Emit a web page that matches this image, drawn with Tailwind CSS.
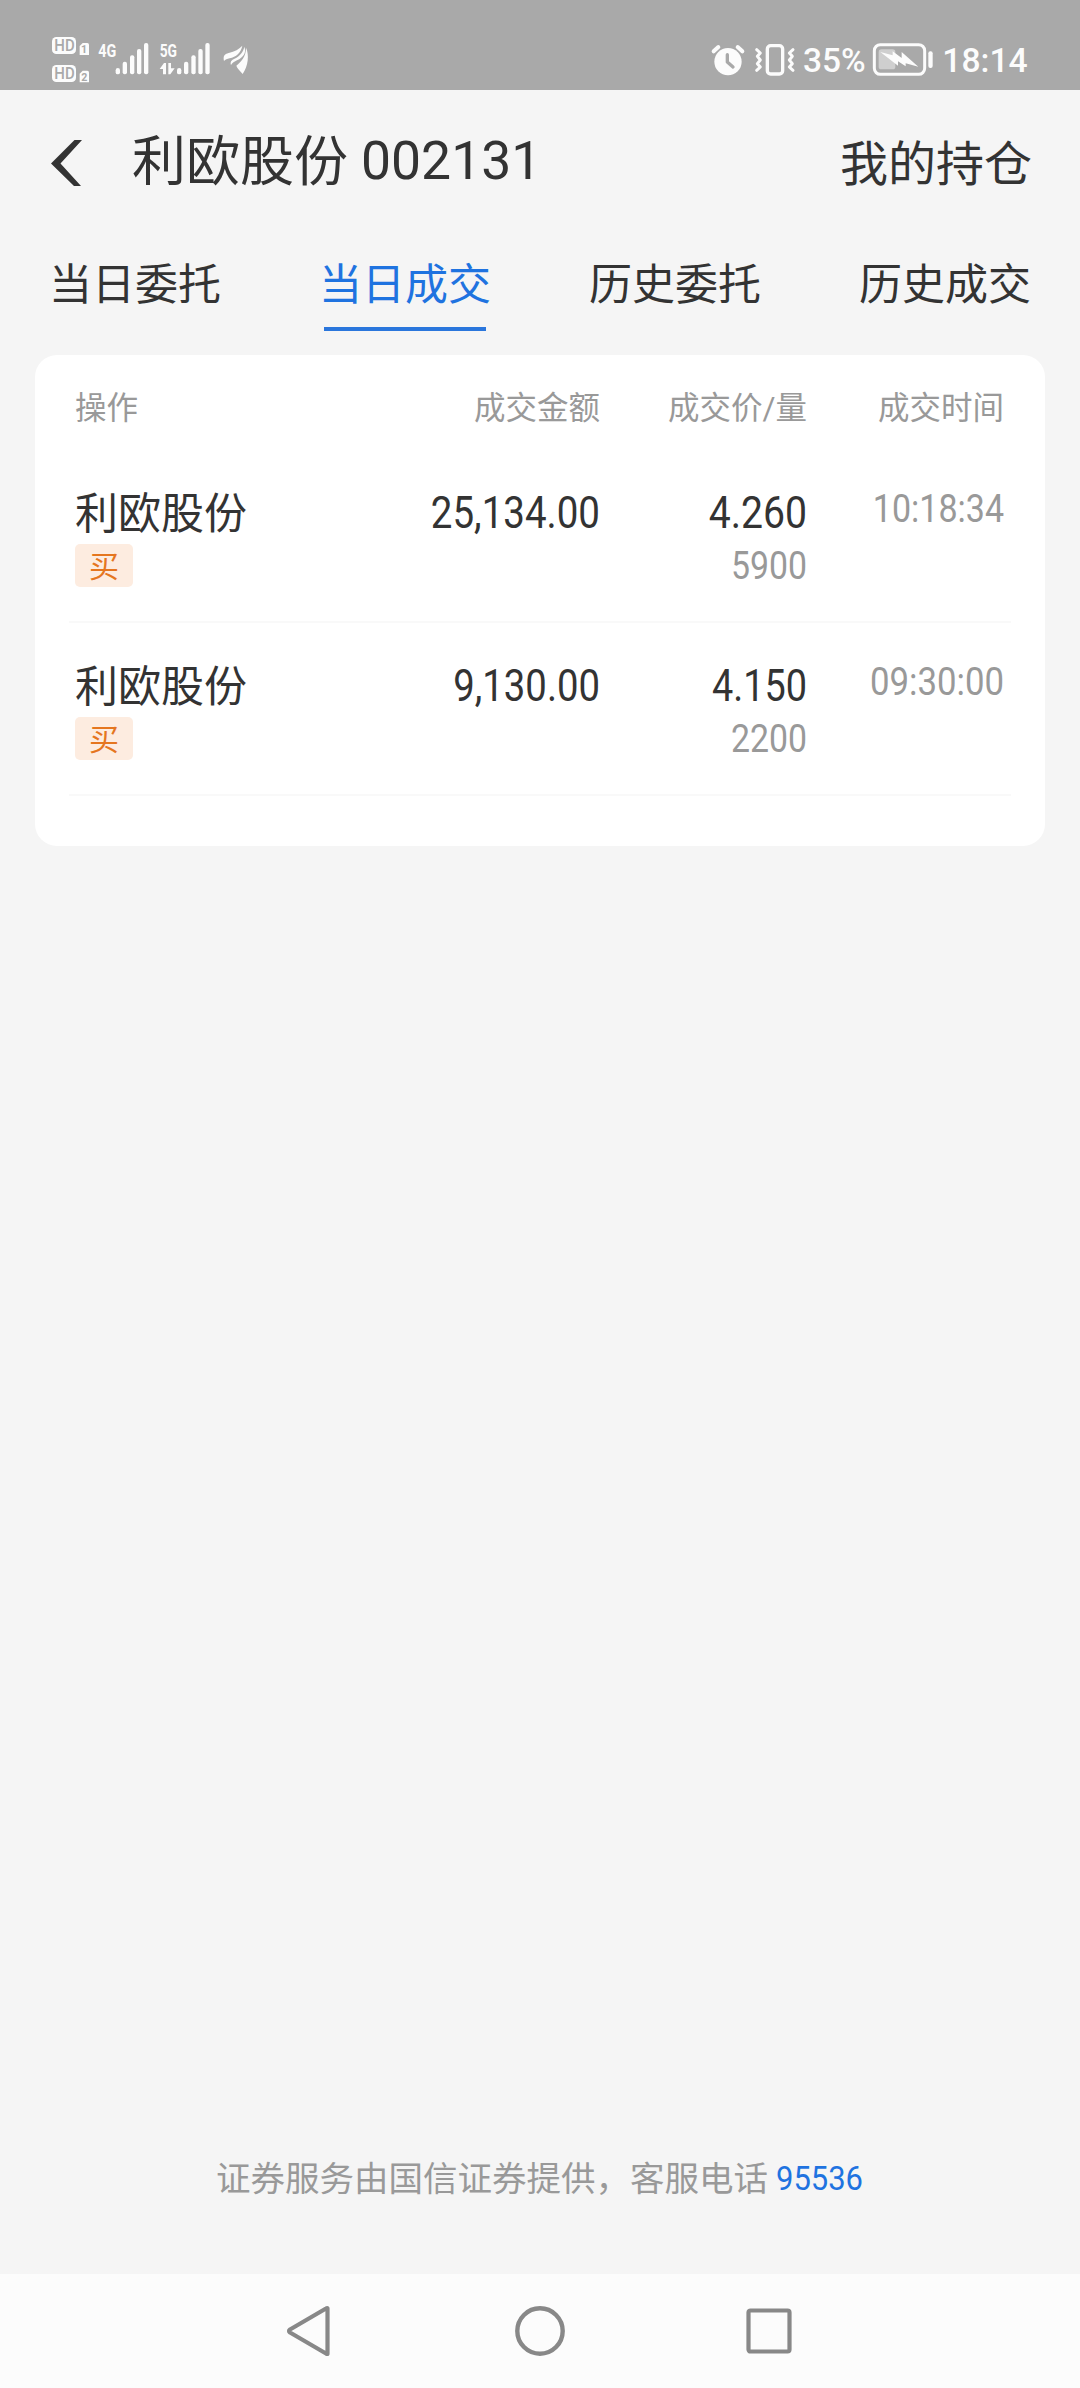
<!DOCTYPE html>
<html lang="zh-CN">
<head>
<meta charset="utf-8">
<title>当日成交</title>
<script src="https://cdn.jsdelivr.net/npm/@tailwindcss/browser@4"></script>
</head>
<body class="bg-[#f5f5f5]">
<div class="flex h-[2388px] w-[1080px] flex-col overflow-hidden bg-[#f5f5f5] font-['Roboto','Noto_Sans_CJK_SC',sans-serif] text-[#333]">

  <!-- status bar -->
  <header class="flex h-[90px] shrink-0 items-end justify-between bg-[#a9a9a9] px-[30px]">
    <svg class="h-[70px] w-[240px]" viewBox="0 0 720 210" fill="#fcfcfc">
      <rect x="66" y="51" width="72" height="51" rx="13"/>
      <rect x="66" y="135" width="72" height="51" rx="13"/>
      <g fill="#a9a9a9" font-family="Roboto" font-weight="500" font-size="48">
        <text x="73" y="94" textLength="61" lengthAdjust="spacingAndGlyphs">HD</text>
        <text x="73" y="178" textLength="61" lengthAdjust="spacingAndGlyphs">HD</text>
      </g>
      <path d="M158 69H172Q177 69 177 74V105H149V78Z"/>
      <path d="M158 152H172Q177 152 177 157V187H149V161Z"/>
      <g fill="#a9a9a9" font-family="Roboto" font-weight="700" font-size="32">
        <text x="153" y="99">1</text>
        <text x="154" y="183">2</text>
      </g>
      <g font-family="Roboto" font-weight="700" font-size="57">
        <text x="205" y="111" textLength="54" lengthAdjust="spacingAndGlyphs">4G</text>
        <text x="389" y="111" textLength="52" lengthAdjust="spacingAndGlyphs">5G</text>
      </g>
      <g id="bars">
        <rect x="257" y="144" width="13" height="19" rx="6.5"/>
        <rect x="278" y="125" width="13" height="38" rx="6"/>
        <rect x="300" y="106" width="13" height="57" rx="6"/>
        <rect x="321" y="87" width="13" height="76" rx="6"/>
        <rect x="342" y="69" width="13" height="94" rx="6"/>
      </g>
      <use href="#bars" x="184"/>
      <path d="M389 147L402 129H408V163H399V147Z"/>
      <path d="M415 129H423V145H434L421 163H415Z"/>
      <path d="M582 123C579 108 583 103 596 99C614 95 628 87 637 77C633 98 618 111 599 115C591 117 586 119 582 123Z"/>
      <path d="M603 135C600 126 604 121 612 117C630 108 640 96 643 80C650 98 640 112 621 121C611 126 606 130 603 135Z"/>
      <path d="M638 162C628 151 622 145 619 137C633 125 648 111 648 83C658 104 655 137 638 162Z"/>
    </svg>
    <svg class="h-[70px] w-[360px]" viewBox="0 0 1080 210" fill="#fcfcfc">
      <circle cx="114" cy="125" r="41"/>
      <path d="M71 94L85 81M157 94L143 81" stroke="#fcfcfc" stroke-width="12" stroke-linecap="round"/>
      <path d="M112 104V126L129 141" fill="none" stroke="#a9a9a9" stroke-width="10" stroke-linecap="round" stroke-linejoin="round"/>
      <rect x="232" y="77" width="46" height="85" rx="10" fill="none" stroke="#fcfcfc" stroke-width="10"/>
      <path d="M200 89L211 99L202 109L211 120L202 131L211 141L200 151" fill="none" stroke="#fcfcfc" stroke-width="9" stroke-linecap="round" stroke-linejoin="round"/>
      <path d="M309 89L298 99L307 109L298 120L307 131L298 141L309 151" fill="none" stroke="#fcfcfc" stroke-width="9" stroke-linecap="round" stroke-linejoin="round"/>
      <text x="339" y="156" font-family="Roboto" font-weight="500" font-size="102" textLength="188" lengthAdjust="spacingAndGlyphs">35%</text>
      <rect x="553" y="74" width="151" height="89" rx="18" fill="none" stroke="#fcfcfc" stroke-width="9"/>
      <rect x="566" y="88" width="50" height="60" rx="8" fill="#cfcfcf"/>
      <path d="M571 96L608 106V94L635 114V96L685 140L647 130V139L624 124V137Z"/>
      <rect x="715" y="94" width="13" height="50" rx="6"/>
      <text x="757" y="156" font-family="Roboto" font-weight="500" font-size="102" textLength="256" lengthAdjust="spacingAndGlyphs">18:14</text>
    </svg>
  </header>

  <!-- title bar -->
  <div class="flex h-[145px] shrink-0 items-center pr-[48px] pl-[50px]">
    <svg class="h-[46px] w-8" viewBox="0 0 32 46" fill="#333"><path d="M24.500 0H32L10.500 23.500L31 46H24L1 23.500Z"/></svg>
    <h1 class="mt-px ml-[50px] flex gap-[13px] text-[54px] leading-[80px] font-normal"><span>利欧股份</span><span class="-mt-0.5 origin-left scale-x-[0.99]">002131</span></h1>
    <a class="mt-1 ml-auto text-[48px] leading-[70px]">我的持仓</a>
  </div>

  <!-- tabs -->
  <nav class="grid h-[96px] shrink-0 grid-cols-4 text-[43px] leading-[64px]">
    <a class="flex flex-col items-center pt-[18px]">当日委托</a>
    <a class="flex flex-col items-center gap-2.5 pt-[18px] text-[#1f73e0]">当日成交<span class="h-1 w-[162px] bg-[#2a76dc]"></span></a>
    <a class="flex flex-col items-center pt-[18px]">历史委托</a>
    <a class="flex flex-col items-center pt-[18px]">历史成交</a>
  </nav>

  <!-- trades -->
  <main class="mx-[35px] mt-6 h-[491px] shrink-0 rounded-[22px] bg-white px-[34px]">
    <div class="grid h-[94px] grid-cols-[294px_231px_207px_197px] pt-[30px] pl-1.5 text-[31.500px] leading-[48px] text-[#999]">
      <span>操作</span><span class="text-right">成交金额</span><span class="text-right">成交价/量</span><span class="text-right">成交时间</span>
    </div>
    <div class="grid h-[174px] grid-cols-[294px_231px_207px_197px] border-b-2 border-[#f9f9f9] pt-[31px] pl-1.5">
      <div>
        <div class="text-[43px] leading-[68px]">利欧股份</div>
        <div class="-mt-1 flex h-[43px] w-[58px] items-center justify-center rounded-[5px] bg-[#fdece0] pt-0.5 text-[30px] leading-none text-[#e5761f]">买</div>
      </div>
      <div class="origin-right scale-x-[0.885] text-right text-[43.500px] leading-[68px]">25,134.00</div>
      <div class="text-right">
        <div class="origin-right scale-x-[0.9] text-[43.500px] leading-[68px]">4.260</div>
        <div class="-mt-[3px] origin-right scale-x-[0.89] text-[38px] leading-[42px] text-[#999]">5900</div>
      </div>
      <div class="origin-right scale-x-[0.895] text-right text-[38px] leading-[58px] text-[#999]">10:18:34</div>
    </div>
    <div class="grid h-[173px] grid-cols-[294px_231px_207px_197px] border-b-2 border-[#f9f9f9] pt-[30px] pl-1.5">
      <div>
        <div class="text-[43px] leading-[68px]">利欧股份</div>
        <div class="-mt-1 flex h-[43px] w-[58px] items-center justify-center rounded-[5px] bg-[#fdece0] pt-0.5 text-[30px] leading-none text-[#e5761f]">买</div>
      </div>
      <div class="origin-right scale-x-[0.88] text-right text-[43.500px] leading-[68px]">9,130.00</div>
      <div class="text-right">
        <div class="origin-right scale-x-[0.87] text-[43.500px] leading-[68px]">4.150</div>
        <div class="-mt-[3px] origin-right scale-x-[0.89] text-[38px] leading-[42px] text-[#999]">2200</div>
      </div>
      <div class="origin-right scale-x-[0.915] text-right text-[38px] leading-[58px] text-[#999]">09:30:00</div>
    </div>
  </main>

  <footer class="mt-auto flex h-[121px] shrink-0 items-start pl-[216px] text-[34.500px] leading-[52px] text-[#999]">
    <span>证券服务由国信证券提供，客服电话</span>
    <a class="-mt-px ml-2 origin-left scale-x-[0.91] text-[34px] text-[#1f73e0]">95536</a>
  </footer>

  <!-- system navigation -->
  <div class="flex h-[114px] shrink-0 items-center bg-[#fcfcfc] pl-[285px]">
    <svg class="h-[52px] w-[46px]" viewBox="0 0 46 52" fill="none" stroke="#888" stroke-width="4.200" stroke-linejoin="round"><path d="M42.500 3.500V48.500Q42.500 49.500 41 48.500L5 27.500Q3 26 5 24.500L41 3.500Q42.500 2.500 42.500 3.500Z"/></svg>
    <svg class="ml-[183px] h-[52px] w-[52px]" viewBox="0 0 52 52" fill="none" stroke="#888" stroke-width="4.400"><circle cx="26" cy="26" r="22.700"/></svg>
    <svg class="ml-[178px] h-[50px] w-[50px]" viewBox="0 0 50 50" fill="none" stroke="#888" stroke-width="4.200"><rect x="4.500" y="4.500" width="41" height="41" rx="2"/></svg>
  </div>
</div>
</body>
</html>
